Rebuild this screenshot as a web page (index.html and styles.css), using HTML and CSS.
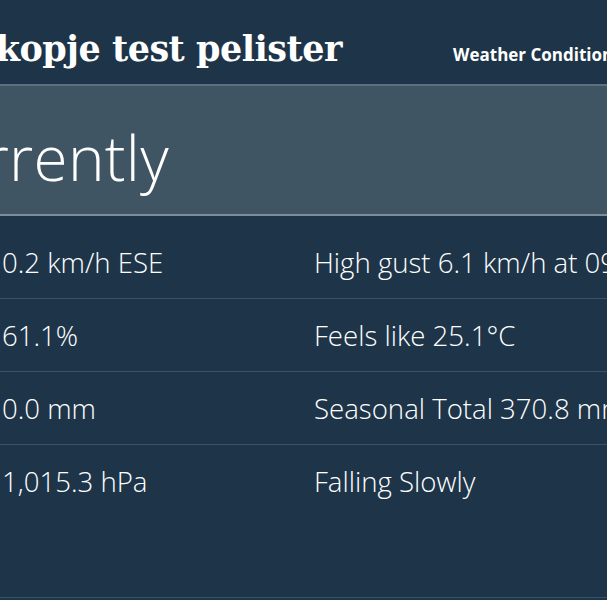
FILE: index.html
```html
<!DOCTYPE html>
<html lang="en">
<head>
  <meta charset="UTF-8">
  <meta name="viewport" content="width=device-width, initial-scale=1.0">
  <title>Skopje test pelister</title>
  <link rel="stylesheet" href="styles.css">
</head>
<body>
  <div class="page">
    <header class="site-header">
      <h1 class="site-title">Skopje test pelister</h1>
      <nav class="site-nav">
        <a href="#">Weather Conditions</a>
        <a href="#">Records</a>
      </nav>
    </header>

    <section class="current">
      <h2>Currently</h2>
    </section>

    <table class="conditions">
      <tr>
        <th>Wind</th>
        <td>0.2 km/h ESE</td>
        <td>High gust 6.1 km/h at 09:12</td>
      </tr>
      <tr>
        <th>Humidity</th>
        <td>61.1%</td>
        <td>Feels like 25.1°C</td>
      </tr>
      <tr>
        <th>Rain</th>
        <td>0.0 mm</td>
        <td>Seasonal Total 370.8 mm</td>
      </tr>
      <tr>
        <th>Barometer</th>
        <td>1,015.3 hPa</td>
        <td>Falling Slowly</td>
      </tr>
    </table>

    <footer class="site-footer"></footer>
  </div>
</body>
</html>
```

FILE: styles.css
```css
body {
  margin: 0;
  background: #1e3549;
  color: #ffffff;
  font-family: "Open Sans", Arial, sans-serif;
  overflow: hidden;
}
.page {
  width: 1100px;
  margin-left: -160px;
}
.site-header {
  display: grid;
  grid-template-columns: 613px 1fr;
  align-items: baseline;
  height: 84px;
  box-sizing: border-box;
  padding-top: 29px;
}
.site-title {
  margin: 0;
  padding-left: 131px;
  font-family: "DejaVu Serif", Georgia, serif;
  font-size: 35px;
  font-weight: bold;
  letter-spacing: -0.5px;
  line-height: 40px;
}
.site-nav {
  display: flex;
  gap: 30px;
}
.site-nav a {
  color: #ffffff;
  text-decoration: none;
  font-size: 17px;
  font-weight: bold;
}
.current {
  background: #405564;
  border-top: 2px solid #5d707e;
  border-bottom: 2px solid #7d8e99;
  height: 128px;
  box-sizing: content-box;
  padding-left: 69px;
}
.current h2 {
  margin: 0;
  padding-top: 27px;
  font-size: 62px;
  font-weight: 300;
  letter-spacing: 0.3px;
  line-height: 88px;
}
.conditions {
  margin-top: 10px;
  border-collapse: collapse;
  font-size: 27.6px;
  font-weight: 300;
  line-height: 32px;
}
.conditions th,
.conditions td {
  padding: 20px 0;
  text-align: left;
  font-weight: 300;
  white-space: nowrap;
}
.conditions tr + tr {
  border-top: 1px solid #3b5266;
}
.conditions th {
  width: 162px;
}
.conditions td:first-of-type {
  width: 312px;
}
.site-footer {
  margin-top: 80px;
  border-top: 1px solid #3b5266;
  height: 20px;
}
```
